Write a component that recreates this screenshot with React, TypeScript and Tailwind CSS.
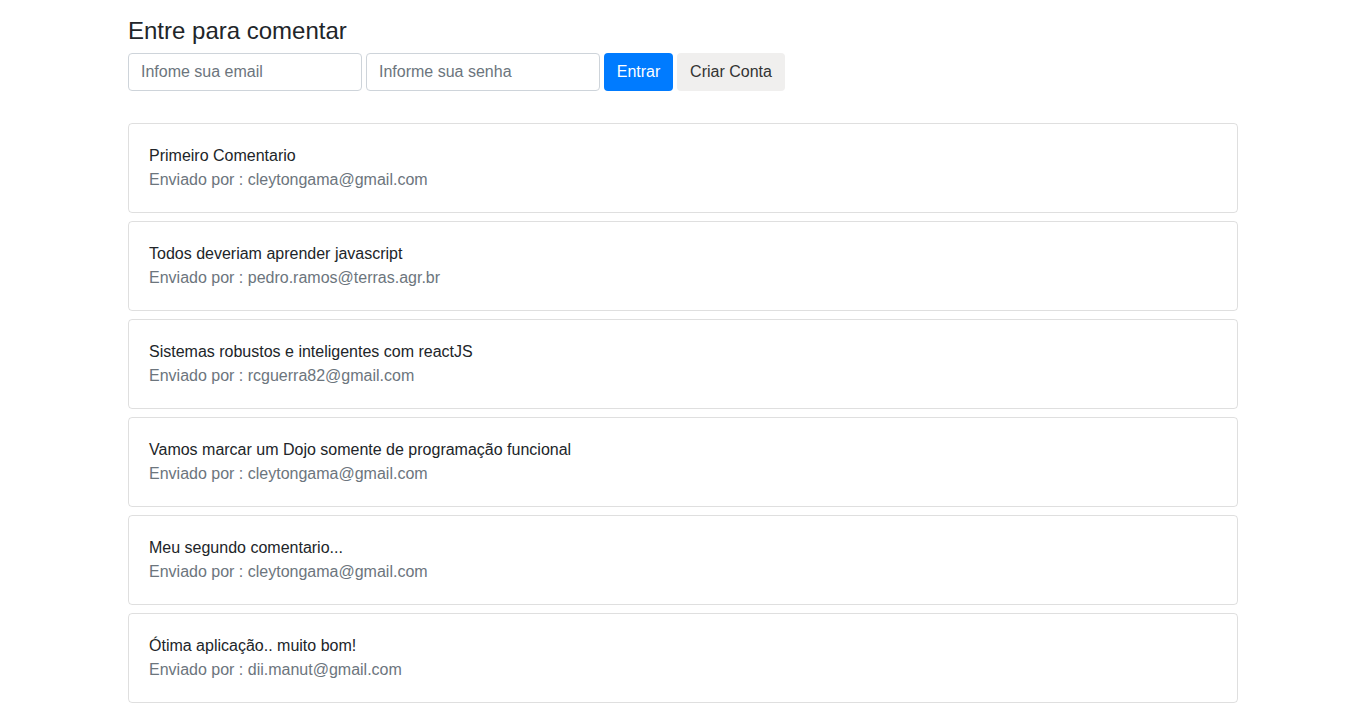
import { useState } from 'react';

interface Comentario {
  texto: string;
  autor: string;
}

const comentarios: Comentario[] = [
  { texto: 'Primeiro Comentario', autor: 'cleytongama@gmail.com' },
  { texto: 'Todos deveriam aprender javascript', autor: 'pedro.ramos@terras.agr.br' },
  { texto: 'Sistemas robustos e inteligentes com reactJS', autor: 'rcguerra82@gmail.com' },
  { texto: 'Vamos marcar um Dojo somente de programação funcional', autor: 'cleytongama@gmail.com' },
  { texto: 'Meu segundo comentario...', autor: 'cleytongama@gmail.com' },
  { texto: 'Ótima aplicação.. muito bom!', autor: 'dii.manut@gmail.com' },
];

export default function App() {
  const [email, setEmail] = useState('');
  const [senha, setSenha] = useState('');

  return (
    <div className="min-h-screen bg-white font-['Liberation_Sans',Arial,sans-serif] text-[#212529]">
      <div className="mx-auto w-[1140px] px-[15px]">
        <h4 className="mt-[17px] mb-[7px] text-2xl leading-[1.2] font-normal">Entre para comentar</h4>
        <form className="flex gap-1" onSubmit={(e) => e.preventDefault()}>
          <input
            type="email"
            value={email}
            onChange={(e) => setEmail(e.target.value)}
            placeholder="Infome sua email"
            className="h-[38px] w-[234px] rounded border border-[#ced4da] px-3 text-base text-[#495057] placeholder-[#6c757d] outline-none"
          />
          <input
            type="password"
            value={senha}
            onChange={(e) => setSenha(e.target.value)}
            placeholder="Informe sua senha"
            className="h-[38px] w-[234px] rounded border border-[#ced4da] px-3 text-base text-[#495057] placeholder-[#6c757d] outline-none"
          />
          <button type="submit" className="h-[38px] w-[69px] rounded bg-[#007bff] text-base text-white">
            Entrar
          </button>
          <button type="button" className="h-[38px] w-[108px] rounded bg-[#f0efee] text-base text-[#333]">
            Criar Conta
          </button>
        </form>

        <div className="mt-8 flex flex-col gap-2 pb-2">
          {comentarios.map((c, i) => (
            <div key={i} className="rounded border border-[rgba(0,0,0,0.125)] p-5 text-base leading-6">
              <div className="text-[#212529]">{c.texto}</div>
              <div className="text-[#6c757d]">Enviado por : {c.autor}</div>
            </div>
          ))}
        </div>
      </div>
    </div>
  );
}
